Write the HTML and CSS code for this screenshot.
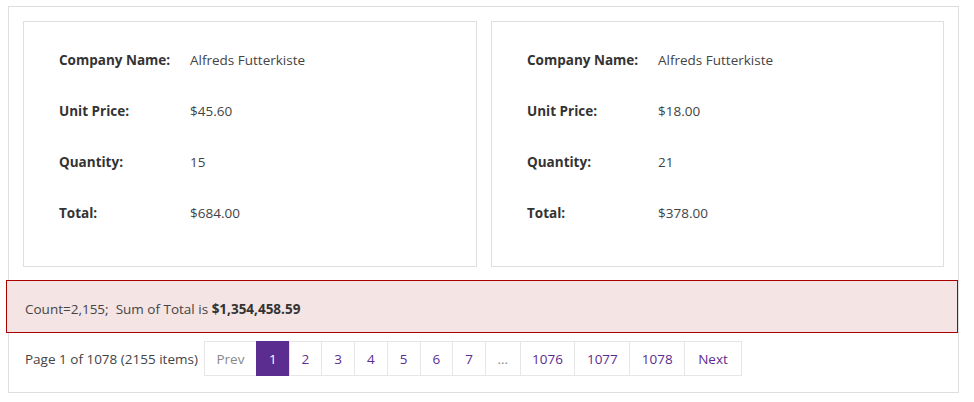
FILE: index.html
```html
<!DOCTYPE html>
<html>
<head>
<meta charset="utf-8">
<link rel="stylesheet" href="styles.css">
</head>
<body>
<div class="view">
  <div class="cards">
    <div class="card">
      <div class="row"><span class="label">Company Name:</span><span class="value">Alfreds Futterkiste</span></div>
      <div class="row"><span class="label">Unit Price:</span><span class="value">$45.60</span></div>
      <div class="row"><span class="label">Quantity:</span><span class="value">15</span></div>
      <div class="row"><span class="label">Total:</span><span class="value">$684.00</span></div>
    </div>
    <div class="card">
      <div class="row"><span class="label">Company Name:</span><span class="value">Alfreds Futterkiste</span></div>
      <div class="row"><span class="label">Unit Price:</span><span class="value">$18.00</span></div>
      <div class="row"><span class="label">Quantity:</span><span class="value">21</span></div>
      <div class="row"><span class="label">Total:</span><span class="value">$378.00</span></div>
    </div>
  </div>
  <div class="summary">Count=2,155;&nbsp; Sum of Total is <b>$1,354,458.59</b></div>
  <div class="pager">
    <span class="summary-text">Page 1 of 1078 (2155 items)</span>
    <ul class="pages">
      <li class="disabled">Prev</li>
      <li class="active">1</li>
      <li>2</li>
      <li>3</li>
      <li>4</li>
      <li>5</li>
      <li>6</li>
      <li>7</li>
      <li class="ellipsis">…</li>
      <li class="wide">1076</li>
      <li class="wide">1077</li>
      <li class="wide">1078</li>
      <li class="next">Next</li>
    </ul>
  </div>
</div>
</body>
</html>
```
FILE: styles.css
```css
html, body {
  margin: 0;
  padding: 0;
  background: #fff;
}
body {
  font-family: "Open Sans", "Segoe UI", sans-serif;
  font-size: 13.5px;
  color: #333;
}
.view {
  box-sizing: border-box;
  width: 951px;
  margin: 6px 0 0 8px;
  border: 1px solid #dedede;
  padding: 14px 14px 16px 14px;
}
.cards {
  display: grid;
  grid-template-columns: 454px 453px;
  column-gap: 14px;
}
.card {
  border: 1px solid #dedede;
  padding: 12px 0 27px 35px;
  height: 246px;
  box-sizing: border-box;
}
.row {
  display: flex;
  align-items: center;
  height: 51px;
}
.label {
  width: 131px;
  font-weight: bold;
  color: #333;
}
.value {
  color: #444;
}
.summary {
  margin: 13px -14px 0 -17px;
  background: #f4e4e4;
  border: 1px solid #a80000;
  padding: 18px 18px 13px 18px;
  line-height: 20px;
  color: #444;
}
.summary b {
  color: #333;
}
.pager {
  display: flex;
  align-items: center;
  margin-top: 8px;
  padding-left: 2px;
}
.summary-text {
  color: #444;
  margin-right: 6px;
}
.pages {
  display: flex;
  list-style: none;
  margin: 0;
  padding: 0;
}
.pages li {
  height: 33px;
  line-height: 34px;
  padding: 0 12px;
  border: 1px solid #e6e6e6;
  margin-left: -1px;
  color: #5c2d91;
  text-align: center;
}
.pages li:first-child {
  margin-left: 0;
}
.pages li.disabled {
  color: #888;
  padding: 0 11.5px;
}
.pages li.active {
  background: #5c2d91;
  border-color: #5c2d91;
  color: #fff;
}
.pages li.ellipsis {
  color: #888;
  padding: 0 11.5px;
}
.pages li.wide {
  padding: 0 11.5px;
}
.pages li.next {
  padding: 0 13px;
}
```
